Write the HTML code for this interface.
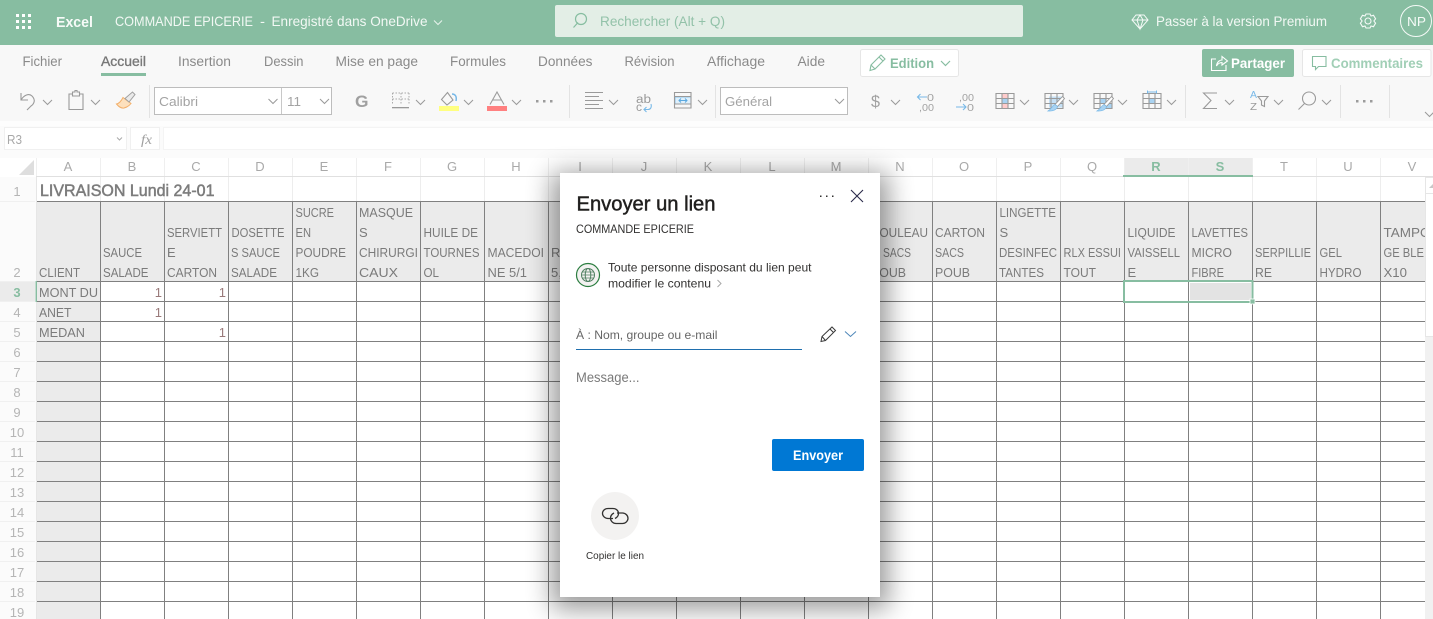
<!DOCTYPE html>
<html lang="fr"><head><meta charset="utf-8"><title>Excel - Envoyer un lien</title>
<style>
html,body{margin:0;padding:0;background:#fff;width:1433px;height:619px;overflow:hidden}
svg{display:block;position:absolute;left:0;top:0}
text{font-family:"Liberation Sans",sans-serif;white-space:pre}
.tb{font-size:14px;fill:#f2f8f4}
.tab{font-size:13.5px;fill:#8a8a8a}
.c{font-size:13px;fill:#7b7b7b}
.h{font-size:13px;fill:#a9a9a9;text-anchor:middle}
.r{font-size:13px;fill:#b5b5b5;text-anchor:middle}
.t{font-size:13px;fill:#a3a3a3}
.d{font-size:12px;fill:#323130}
.ic{fill:none;stroke:#9a9a9a;stroke-width:1.1}
.ch{fill:none;stroke:#9a9a9a;stroke-width:1}
</style></head><body>
<svg width="1433" height="619" viewBox="0 0 1433 619" xmlns="http://www.w3.org/2000/svg">
<defs>
<path id="cv" d="M0 0L4.5 4.5L9 0" class="ch"/>
<filter id="sh" x="-25%" y="-25%" width="150%" height="150%"><feGaussianBlur stdDeviation="13"/></filter>
<clipPath id="gc"><rect x="36" y="177" width="1389" height="442"/></clipPath>
<g id="tbl"><path d="M0 0H18V15H0ZM6 0V15M12 0V15M0 5H18M0 10H18" class="ic"/></g>
</defs>

<!-- title bar -->
<rect width="1433" height="45" fill="#87bda1"/>
<g fill="#fff"><rect x="16" y="14" width="3" height="3"/><rect x="22" y="14" width="3" height="3"/><rect x="28" y="14" width="3" height="3"/><rect x="16" y="20" width="3" height="3"/><rect x="22" y="20" width="3" height="3"/><rect x="28" y="20" width="3" height="3"/><rect x="16" y="26" width="3" height="3"/><rect x="22" y="26" width="3" height="3"/><rect x="28" y="26" width="3" height="3"/></g>
<text x="56" y="27" font-size="14.5" font-weight="700" fill="#f7fbf8" textLength="37" lengthAdjust="spacingAndGlyphs">Excel</text>
<text class="tb" x="115" y="26" textLength="138" lengthAdjust="spacingAndGlyphs">COMMANDE EPICERIE</text>
<text class="tb" x="260" y="26" textLength="5" lengthAdjust="spacingAndGlyphs">-</text>
<text class="tb" x="271.5" y="26" textLength="156" lengthAdjust="spacingAndGlyphs">Enregistré dans OneDrive</text>
<path d="M434 20.5L438 24.5L442 20.5" fill="none" stroke="#e8f3ec" stroke-width="1"/>
<rect x="555" y="5" width="468" height="32" rx="2" fill="#e3eee6"/>
<path d="M578 22.5L573.5 27.5M586.5 19a5.5 5.5 0 1 1-11 0a5.5 5.5 0 1 1 11 0Z" fill="none" stroke="#86bda0" stroke-width="1.2"/>
<text x="600" y="26" font-size="14" fill="#93c2a9" textLength="125" lengthAdjust="spacingAndGlyphs">Rechercher (Alt + Q)</text>
<path d="M1136 15H1144L1148 20L1140 29L1132 20ZM1132 20H1148M1137 20L1140 29L1143 20L1140 15L1137 20" fill="none" stroke="#f5faf7" stroke-width="1"/>
<text class="tb" x="1156" y="26" textLength="171" lengthAdjust="spacingAndGlyphs">Passer à la version Premium</text>
<circle cx="1368" cy="21" r="3" fill="none" stroke="#f5faf7" stroke-width="1.1"/>
<path d="M1366 14H1370L1371 16L1373.5 15.3L1375.6 18.8L1374 20.8V21.2L1375.6 23.2L1373.5 26.7L1371 26L1370 28H1366L1365 26L1362.5 26.7L1360.4 23.2L1362 21.2V20.8L1360.4 18.8L1362.5 15.3L1365 16Z" fill="none" stroke="#f5faf7" stroke-width="1.1"/>
<circle cx="1416" cy="21" r="15.5" fill="none" stroke="#f5faf7" stroke-width="1"/>
<text x="1407" y="26" font-size="13" fill="#f5faf7" textLength="19" lengthAdjust="spacingAndGlyphs">NP</text>

<!-- ribbon -->
<rect y="45" width="1433" height="76" fill="#f8f8f8"/>
<rect y="121" width="1433" height="37" fill="#fbfbfb"/>
<rect y="121" width="1433" height="5" fill="#fdfdfd"/>
<text class="tab" x="22.5" y="66" textLength="39.5" lengthAdjust="spacingAndGlyphs">Fichier</text>
<text x="101" y="66" font-size="13.5" fill="#787878" stroke="#787878" stroke-width=".35" textLength="45" lengthAdjust="spacingAndGlyphs">Accueil</text>
<rect x="101" y="73" width="45" height="3" fill="#87bda1"/>
<text class="tab" x="178" y="66" textLength="53" lengthAdjust="spacingAndGlyphs">Insertion</text>
<text class="tab" x="264" y="66" textLength="39.5" lengthAdjust="spacingAndGlyphs">Dessin</text>
<text class="tab" x="335.5" y="66" textLength="82.5" lengthAdjust="spacingAndGlyphs">Mise en page</text>
<text class="tab" x="450" y="66" textLength="56" lengthAdjust="spacingAndGlyphs">Formules</text>
<text class="tab" x="538" y="66" textLength="54.5" lengthAdjust="spacingAndGlyphs">Données</text>
<text class="tab" x="624.5" y="66" textLength="50" lengthAdjust="spacingAndGlyphs">Révision</text>
<text class="tab" x="707" y="66" textLength="58" lengthAdjust="spacingAndGlyphs">Affichage</text>
<text class="tab" x="797.5" y="66" textLength="27.5" lengthAdjust="spacingAndGlyphs">Aide</text>

<rect x="860.5" y="49.5" width="98" height="27" rx="2" fill="#fff" stroke="#e6e6e6"/>
<path d="M870 70.5L871 65L881 55L885 59L875 69ZM871 65L875 69M879 57L883 61" fill="none" stroke="#87bda1" stroke-width="1.1"/>
<text x="890" y="68" font-size="14" font-weight="700" fill="#87bda1" textLength="44" lengthAdjust="spacingAndGlyphs">Edition</text>
<path d="M941 61L945.5 65.5L950 61" fill="none" stroke="#87bda1" stroke-width="1.2"/>

<rect x="1202" y="49" width="92" height="28" rx="2" fill="#87bda1"/>
<path d="M1216 59H1211.5V70.5H1226V65M1216.5 66C1217 61.5 1220 60 1222 60V56.5L1227.5 61L1222 65V62.5C1220 62.5 1218 63.5 1216.5 66Z" fill="none" stroke="#fff" stroke-width="1.1"/>
<text x="1231" y="68" font-size="14" font-weight="700" fill="#fff" textLength="54" lengthAdjust="spacingAndGlyphs">Partager</text>
<rect x="1302.5" y="49.5" width="128.5" height="27" rx="2" fill="#fff" stroke="#e6e6e6"/>
<path d="M1312.5 56.5H1326V66.5H1318.5L1315.5 69.5V66.5H1312.5Z" fill="none" stroke="#87bda1" stroke-width="1.1"/>
<text x="1331" y="68" font-size="14" font-weight="700" fill="#a1cfb6" textLength="92" lengthAdjust="spacingAndGlyphs">Commentaires</text>

<!-- toolbar -->
<path d="M21 93V100H28M21 100C24 95 29 93 32 96C36 100 34 104 31 106L27 110" class="ic" stroke-width="1.2"/>
<use href="#cv" x="43" y="100"/>
<path d="M72.5 94H69V109.5H83V94H79.5M72.5 92H75V90.5H77V92H79.5V96H72.5Z" class="ic"/>
<use href="#cv" x="91" y="100"/>
<path d="M123 97.5L131 103.5C129 106 126 107.500 124 108C121 108.500 119 107 116.500 104C119 103.500 121.500 100.500 123 97.500Z" fill="#fde0bd" stroke="#f3b06b" stroke-width="1"/>
<path d="M125 98.500L132.500 92L135 94.500L129 102Z" fill="#eaeaea" stroke="#a0a0a0" stroke-width="1"/>
<rect x="149" y="85" width="1" height="33" fill="#e3e3e3"/>
<rect x="154.5" y="87.5" width="177" height="27" fill="#fff" stroke="#bdbdbd"/>
<path d="M281.5 88V114" stroke="#c8c8c8"/>
<text class="t" x="159" y="106" textLength="39" lengthAdjust="spacingAndGlyphs">Calibri</text>
<use href="#cv" x="268.5" y="99"/>
<text class="t" x="287" y="106" textLength="14" lengthAdjust="spacingAndGlyphs">11</text>
<use href="#cv" x="320" y="99"/>
<text x="355" y="107" font-size="17" font-weight="700" fill="#a0a0a0" textLength="13.5" lengthAdjust="spacingAndGlyphs">G</text>
<path d="M392.5 93H409M392.5 93V104M409 93V104M401 93V104M392.5 99H409" fill="none" stroke="#aaa" stroke-width="1" stroke-dasharray="1.5 1.5"/>
<rect x="392" y="107" width="17" height="1.3" fill="#999"/>
<use href="#cv" x="416" y="100"/>
<path d="M441.5 99.5L447.5 92.5L453 100L447 105Z" class="ic"/>
<path d="M452 94C455 94 457 96 456 101" fill="none" stroke="#78b9e8" stroke-width="1.5"/>
<rect x="439" y="106" width="20" height="5" fill="#ffff80"/>
<use href="#cv" x="464" y="100"/>
<path d="M490 104.5L497 92L504 104.5M492.5 100H501.5" fill="none" stroke="#9c9c9c" stroke-width="1.1"/>
<rect x="487" y="106" width="20" height="5" fill="#ff8080"/>
<use href="#cv" x="512" y="100"/>
<g fill="#9c9c9c"><rect x="536" y="100" width="2.5" height="2.5"/><rect x="543" y="100" width="2.5" height="2.5"/><rect x="550" y="100" width="2.5" height="2.5"/></g>
<rect x="569" y="85" width="1" height="33" fill="#e3e3e3"/>
<path d="M585 92.5H603M585 96.5H599M585 100.5H603M585 104.5H599M585 108.5H603" class="ic"/>
<use href="#cv" x="609" y="100"/>
<text x="636" y="103" font-size="11.5" fill="#9a9a9a" textLength="15" lengthAdjust="spacingAndGlyphs">ab</text>
<text x="636" y="111" font-size="11.5" fill="#9a9a9a" textLength="6" lengthAdjust="spacingAndGlyphs">c</text>
<path d="M651 104C652 108 650 109.500 648 109.500H644M646.500 107L644 109.500L646.500 112" fill="none" stroke="#78b9e8" stroke-width="1.1"/>
<rect x="675" y="97" width="16" height="7" fill="#e0f0fb" stroke="#8cc6ee"/>
<path d="M674.5 92.500H691V108H674.500ZM674.500 96.500H691M674.500 104H691" class="ic"/>
<path d="M679 100.500H687M681 98.500L679 100.500L681 102.500M685 98.500L687 100.500L685 102.500" fill="none" stroke="#5ba9e0" stroke-width="1"/>
<use href="#cv" x="698" y="100"/>
<rect x="715" y="85" width="1" height="33" fill="#e3e3e3"/>
<rect x="720.5" y="87.500" width="127" height="27" fill="#fff" stroke="#bdbdbd"/>
<text class="t" x="725" y="106" textLength="47" lengthAdjust="spacingAndGlyphs">Général</text>
<use href="#cv" x="835" y="99"/>
<text x="871" y="107" font-size="17" fill="#a0a0a0" textLength="9" lengthAdjust="spacingAndGlyphs">$</text>
<use href="#cv" x="891" y="100"/>
<path d="M927 97H917.500M920.500 94L917.500 97L920.500 100" fill="none" stroke="#78b9e8" stroke-width="1.1"/>
<text x="927" y="101" font-size="10.500" fill="#a3a3a3" textLength="7" lengthAdjust="spacingAndGlyphs">0</text>
<text x="919" y="111" font-size="10.500" fill="#a3a3a3" textLength="15" lengthAdjust="spacingAndGlyphs">,00</text>
<text x="959" y="101" font-size="10.500" fill="#a3a3a3" textLength="15" lengthAdjust="spacingAndGlyphs">,00</text>
<path d="M956 107H966M963 104L966 107L963 110" fill="none" stroke="#78b9e8" stroke-width="1.1"/>
<text x="967" y="111" font-size="10.500" fill="#a3a3a3" textLength="7" lengthAdjust="spacingAndGlyphs">0</text>

<g transform="translate(996,93.500)"><rect x="6" y="0" width="6" height="5" fill="#fcc"/><rect x="6" y="5" width="6" height="5" fill="#a9d3f2"/><rect x="6" y="10" width="6" height="5" fill="#fcc"/><use href="#tbl"/></g>
<use href="#cv" x="1020" y="100"/>
<g transform="translate(1045,93.500)"><rect x="4" y="3" width="14" height="11" fill="#c5e0f5"/><use href="#tbl"/><path d="M17.500 3L19.500 5L12.500 13L10 11Z" fill="#fff" stroke="#9a9a9a" stroke-width=".9"/><path d="M10 11L12.500 13C12 16 8 18 3 17.500C6 16 6.500 13 10 11Z" fill="#a9d3f2" stroke="#78b9e8" stroke-width=".7"/></g>
<use href="#cv" x="1069" y="100"/>
<g transform="translate(1094,93.500)"><rect x="6" y="5" width="6" height="5" fill="#a9d3f2"/><rect x="12" y="10" width="6" height="5" fill="#a9d3f2"/><use href="#tbl"/><path d="M17.500 3L19.500 5L12.500 13L10 11Z" fill="#fff" stroke="#9a9a9a" stroke-width=".9"/><path d="M10 11L12.500 13C12 16 8 18 3 17.500C6 16 6.500 13 10 11Z" fill="#a9d3f2" stroke="#78b9e8" stroke-width=".7"/></g>
<use href="#cv" x="1118" y="100"/>
<g transform="translate(1143,93.500)"><rect x="6" y="5" width="6" height="5" fill="#a9d3f2"/><use href="#tbl"/><path d="M4.500 -1.500H13.500M4.500 -3V0M13.500 -3V0" fill="none" stroke="#78b9e8"/></g>
<use href="#cv" x="1167" y="100"/>
<rect x="1185" y="85" width="1" height="33" fill="#e3e3e3"/>
<path d="M1217 93H1203.500L1211 100.500L1203.500 108.500H1217" class="ic"/>
<use href="#cv" x="1225" y="100"/>
<text x="1250" y="98" font-size="10" fill="#78b9e8" textLength="7" lengthAdjust="spacingAndGlyphs">A</text>
<text x="1250" y="110" font-size="10" fill="#999" textLength="7" lengthAdjust="spacingAndGlyphs">Z</text>
<path d="M1258 96.500H1268L1264.500 101V106.500L1261.500 105V101Z" class="ic"/>
<use href="#cv" x="1274" y="100"/>
<circle cx="1309" cy="98.500" r="6.500" class="ic"/><path d="M1304.500 103.500L1298.500 109.500" class="ic"/>
<use href="#cv" x="1322" y="100"/>
<rect x="1340" y="85" width="1" height="33" fill="#e3e3e3"/>
<g fill="#9c9c9c"><rect x="1356" y="100" width="2.500" height="2.500"/><rect x="1363" y="100" width="2.500" height="2.500"/><rect x="1370" y="100" width="2.500" height="2.500"/></g>
<rect x="1389" y="85" width="1" height="33" fill="#e3e3e3"/>
<use href="#cv" x="1425" y="112"/>

<!-- formula bar -->
<rect x="4.500" y="127.500" width="122" height="22" fill="#fff" stroke="#f0f0f0"/>
<text x="7" y="144" font-size="12.500" fill="#a8a8a8" textLength="15" lengthAdjust="spacingAndGlyphs">R3</text>
<path d="M117 137.500L119.500 140L122 137.500" fill="none" stroke="#aaa"/>
<rect x="130.500" y="127.500" width="29" height="22" fill="#fff" stroke="#f0f0f0"/>
<text x="141" y="144" font-size="14" font-style="italic" fill="#a0a0a0" style="font-family:'Liberation Serif',serif" textLength="11" lengthAdjust="spacingAndGlyphs">fx</text>
<rect x="163.500" y="127.500" width="1270" height="22" fill="#fff" stroke="#f4f4f4"/>

<!-- headers -->
<rect x="1124" y="158" width="129" height="18" fill="#ebebeb"/>
<path d="M19 175H34V160Z" fill="#dedede"/>
<path d="M36.500 158V177M100.500 158V177M164.500 158V177M228.500 158V177M292.500 158V177M356.500 158V177M420.500 158V177M484.500 158V177M548.500 158V177M612.500 158V177M676.500 158V177M740.500 158V177M804.500 158V177M868.500 158V177M932.500 158V177M996.500 158V177M1060.500 158V177M1124.500 158V177M1188.500 158V177M1252.500 158V177M1316.500 158V177M1380.500 158V177" stroke="#efefef"/>
<rect x="36" y="176" width="1397" height="1" fill="#e0e0e0"/>
<rect x="1123" y="175" width="130" height="2" fill="#87bda1"/>
<text class="h" x="68" y="171">A</text><text class="h" x="132" y="171">B</text><text class="h" x="196" y="171">C</text><text class="h" x="260" y="171">D</text><text class="h" x="324" y="171">E</text><text class="h" x="388" y="171">F</text><text class="h" x="452" y="171">G</text><text class="h" x="516" y="171">H</text><text class="h" x="580" y="171">I</text><text class="h" x="644" y="171">J</text><text class="h" x="708" y="171">K</text><text class="h" x="772" y="171">L</text><text class="h" x="836" y="171">M</text><text class="h" x="900" y="171">N</text><text class="h" x="964" y="171">O</text><text class="h" x="1028" y="171">P</text><text class="h" x="1092" y="171">Q</text>
<text class="h" x="1156" y="171" font-weight="700" style="fill:#87bda1">R</text><text class="h" x="1220" y="171" font-weight="700" style="fill:#87bda1">S</text>
<text class="h" x="1284" y="171">T</text><text class="h" x="1348" y="171">U</text><text class="h" x="1412" y="171">V</text>

<!-- row headers -->
<rect x="0" y="177" width="36" height="442" fill="#fbfbfb"/>
<rect x="0" y="281" width="35" height="21" fill="#ebebeb"/>
<text class="r" x="17" y="196">1</text><text class="r" x="17" y="277">2</text>
<text class="r" x="17" y="297" font-weight="700" style="fill:#87bda1">3</text>
<text class="r" x="17" y="317">4</text><text class="r" x="17" y="337">5</text><text class="r" x="17" y="357">6</text><text class="r" x="17" y="377">7</text><text class="r" x="17" y="397">8</text><text class="r" x="17" y="417">9</text><text class="r" x="17" y="437">10</text><text class="r" x="17" y="457">11</text><text class="r" x="17" y="477">12</text><text class="r" x="17" y="497">13</text><text class="r" x="17" y="517">14</text><text class="r" x="17" y="537">15</text><text class="r" x="17" y="557">16</text><text class="r" x="17" y="577">17</text><text class="r" x="17" y="597">18</text><text class="r" x="17" y="617">19</text>
<path d="M0 201.500H35M0 281.500H35M0 301.500H35M0 321.500H35M0 341.500H35M0 361.500H35M0 381.500H35M0 401.500H35M0 421.500H35M0 441.500H35M0 461.500H35M0 481.500H35M0 501.500H35M0 521.500H35M0 541.500H35M0 561.500H35M0 581.500H35M0 601.500H35" stroke="#f0f0f0"/>

<!-- sheet -->
<g clip-path="url(#gc)">
<rect x="36" y="177" width="1397" height="442" fill="#fff"/>
<rect x="36" y="201" width="1397" height="80" fill="#ebebeb"/>
<rect x="36" y="281" width="64" height="338" fill="#ebebeb"/>
<path d="M100.500 177V201M164.500 177V201M228.500 177V201M292.500 177V201M356.500 177V201M420.500 177V201M484.500 177V201M548.500 177V201M612.500 177V201M676.500 177V201M740.500 177V201M804.500 177V201M868.500 177V201M932.500 177V201M996.500 177V201M1060.500 177V201M1124.500 177V201M1188.500 177V201M1252.500 177V201M1316.500 177V201M1380.500 177V201" stroke="#ededed"/>
<path d="M36 201.500H1433M36 281.500H1433M36 301.500H1433M36 321.500H1433M36 341.500H1433M36 361.500H1433M36 381.500H1433M36 401.500H1433M36 421.500H1433M36 441.500H1433M36 461.500H1433M36 481.500H1433M36 501.500H1433M36 521.500H1433M36 541.500H1433M36 561.500H1433M36 581.500H1433M36 601.500H1433" stroke="#808080"/>
<path d="M100.500 201V619M164.500 201V619M228.500 201V619M292.500 201V619M356.500 201V619M420.500 201V619M484.500 201V619M548.500 201V619M612.500 201V619M676.500 201V619M740.500 201V619M804.500 201V619M868.500 201V619M932.500 201V619M996.500 201V619M1060.500 201V619M1124.500 201V619M1188.500 201V619M1252.500 201V619M1316.500 201V619M1380.500 201V619" stroke="#808080"/>
<text x="40" y="196" font-size="16.500" fill="#7c7c7c" stroke="#7c7c7c" stroke-width=".5" textLength="174.500" lengthAdjust="spacingAndGlyphs">LIVRAISON Lundi 24-01</text>
<text class="c" x="39" y="277" textLength="41" lengthAdjust="spacingAndGlyphs">CLIENT</text>
<text class="c" x="103" y="257" textLength="39" lengthAdjust="spacingAndGlyphs">SAUCE</text><text class="c" x="103" y="277" textLength="45.500" lengthAdjust="spacingAndGlyphs">SALADE</text>
<text class="c" x="167" y="237" textLength="55" lengthAdjust="spacingAndGlyphs">SERVIETT</text><text class="c" x="167" y="257">E</text><text class="c" x="167" y="277" textLength="50" lengthAdjust="spacingAndGlyphs">CARTON</text>
<text class="c" x="231.500" y="237" textLength="53" lengthAdjust="spacingAndGlyphs">DOSETTE</text><text class="c" x="231" y="257" textLength="49" lengthAdjust="spacingAndGlyphs">S SAUCE</text><text class="c" x="231" y="277" textLength="46" lengthAdjust="spacingAndGlyphs">SALADE</text>
<text class="c" x="295.500" y="217" textLength="38.500" lengthAdjust="spacingAndGlyphs">SUCRE</text><text class="c" x="295.500" y="237" textLength="15.500" lengthAdjust="spacingAndGlyphs">EN</text><text class="c" x="295.500" y="257" textLength="50.500" lengthAdjust="spacingAndGlyphs">POUDRE</text><text class="c" x="295.500" y="277" textLength="23.500" lengthAdjust="spacingAndGlyphs">1KG</text>
<text class="c" x="359" y="217" textLength="54" lengthAdjust="spacingAndGlyphs">MASQUE</text><text class="c" x="359" y="237">S</text><text class="c" x="359" y="257" textLength="59" lengthAdjust="spacingAndGlyphs">CHIRURGI</text><text class="c" x="359" y="277" textLength="39" lengthAdjust="spacingAndGlyphs">CAUX</text>
<text class="c" x="423.500" y="237" textLength="54.500" lengthAdjust="spacingAndGlyphs">HUILE DE</text><text class="c" x="423.500" y="257" textLength="56" lengthAdjust="spacingAndGlyphs">TOURNES</text><text class="c" x="423.500" y="277" textLength="15.500" lengthAdjust="spacingAndGlyphs">OL</text>
<text class="c" x="487.500" y="257" textLength="56.500" lengthAdjust="spacingAndGlyphs">MACEDOI</text><text class="c" x="487.500" y="277" textLength="39.500" lengthAdjust="spacingAndGlyphs">NE 5/1</text>
<text class="c" x="551" y="257">R</text><text class="c" x="551" y="277">5,</text>
<text class="c" x="871" y="237" textLength="57" lengthAdjust="spacingAndGlyphs">ROULEAU</text><text class="c" x="883" y="257" textLength="28" lengthAdjust="spacingAndGlyphs">SACS</text><text class="c" x="871" y="277" textLength="35" lengthAdjust="spacingAndGlyphs">POUB</text>
<text class="c" x="935" y="237" textLength="50" lengthAdjust="spacingAndGlyphs">CARTON</text><text class="c" x="935" y="257" textLength="29" lengthAdjust="spacingAndGlyphs">SACS</text><text class="c" x="935" y="277" textLength="35" lengthAdjust="spacingAndGlyphs">POUB</text>
<text class="c" x="999.500" y="217" textLength="56.500" lengthAdjust="spacingAndGlyphs">LINGETTE</text><text class="c" x="999.500" y="237">S</text><text class="c" x="999" y="257" textLength="58" lengthAdjust="spacingAndGlyphs">DESINFEC</text><text class="c" x="999" y="277" textLength="45" lengthAdjust="spacingAndGlyphs">TANTES</text>
<text class="c" x="1063.500" y="257" textLength="57.500" lengthAdjust="spacingAndGlyphs">RLX ESSUI</text><text class="c" x="1063.500" y="277" textLength="32.500" lengthAdjust="spacingAndGlyphs">TOUT</text>
<text class="c" x="1127.500" y="237" textLength="48" lengthAdjust="spacingAndGlyphs">LIQUIDE</text><text class="c" x="1127.500" y="257" textLength="52.500" lengthAdjust="spacingAndGlyphs">VAISSELL</text><text class="c" x="1127.500" y="277">E</text>
<text class="c" x="1191.500" y="237" textLength="56.500" lengthAdjust="spacingAndGlyphs">LAVETTES</text><text class="c" x="1191.500" y="257" textLength="40.500" lengthAdjust="spacingAndGlyphs">MICRO</text><text class="c" x="1191.500" y="277" textLength="32.500" lengthAdjust="spacingAndGlyphs">FIBRE</text>
<text class="c" x="1255" y="257" textLength="56" lengthAdjust="spacingAndGlyphs">SERPILLIE</text><text class="c" x="1255" y="277" textLength="17" lengthAdjust="spacingAndGlyphs">RE</text>
<text class="c" x="1319.500" y="257" textLength="22.500" lengthAdjust="spacingAndGlyphs">GEL</text><text class="c" x="1319.500" y="277" textLength="42" lengthAdjust="spacingAndGlyphs">HYDRO</text>
<text class="c" x="1383.500" y="237" textLength="47" lengthAdjust="spacingAndGlyphs">TAMPO</text><text class="c" x="1383.500" y="257" textLength="40.500" lengthAdjust="spacingAndGlyphs">GE BLE</text><text class="c" x="1383.500" y="277" textLength="23.500" lengthAdjust="spacingAndGlyphs">X10</text>
<text class="c" x="39" y="297" textLength="59" lengthAdjust="spacingAndGlyphs">MONT DU</text><text class="c" x="39" y="317" textLength="32.500" lengthAdjust="spacingAndGlyphs">ANET</text><text class="c" x="39" y="337" textLength="46" lengthAdjust="spacingAndGlyphs">MEDAN</text>
<g style="text-anchor:end"><text class="c" x="162" y="297" style="fill:#9a7a7a">1</text><text class="c" x="226" y="297" style="fill:#9a7a7a">1</text><text class="c" x="162" y="317" style="fill:#9a7a7a">1</text><text class="c" x="226" y="337" style="fill:#9a7a7a">1</text></g>
<rect x="1190" y="283" width="61" height="17" fill="#e3e3e3"/>
<rect x="1124" y="281" width="128.500" height="21" fill="none" stroke="#87bda1" stroke-width="2"/>
<rect x="1250" y="299" width="5" height="5" fill="#87bda1" stroke="#fff" stroke-width=".8"/>
</g>
<rect x="36" y="177" width="1" height="442" fill="#e6e6e6"/>
<rect x="35.500" y="281" width="1.500" height="21" fill="#87bda1"/>

<!-- scrollbar -->
<rect x="1425" y="177" width="8" height="442" fill="#f1f1f1"/>
<rect x="1425.500" y="177.500" width="8" height="159" fill="#fff" stroke="#e6e6e6"/>
<path d="M1429 188H1433V184Z" fill="#c8c8c8"/>
<rect x="1425" y="193" width="8" height="1" fill="#e6e6e6"/>

<!-- dialog -->
<rect x="552" y="173" width="336" height="436" fill="#000" opacity=".4" filter="url(#sh)"/>
<rect x="560" y="173" width="320" height="424" fill="#fff"/>
<text x="576.500" y="210.500" font-size="20" fill="#201f1e" stroke="#201f1e" stroke-width=".45" textLength="139" lengthAdjust="spacingAndGlyphs">Envoyer un lien</text>
<text class="d" x="576" y="233" textLength="118" lengthAdjust="spacingAndGlyphs">COMMANDE EPICERIE</text>
<g fill="#323130"><rect x="820" y="195.500" width="1.500" height="1.500"/><rect x="826" y="195.500" width="1.500" height="1.500"/><rect x="832" y="195.500" width="1.500" height="1.500"/></g>
<path d="M851 190L863 202M863 190L851 202" stroke="#2b2b4a" stroke-width="1.100" fill="none"/>
<circle cx="588" cy="275" r="11.500" fill="#f3f2f1" stroke="#2a7d3f" stroke-width="1.200"/>
<circle cx="588" cy="275" r="6.500" fill="none" stroke="#4f7f60" stroke-width="1"/>
<ellipse cx="588" cy="275" rx="2.800" ry="6.500" fill="none" stroke="#4f7f60" stroke-width="1"/>
<path d="M581.500 275H594.500M582.500 272H593.500M582.500 278H593.500" stroke="#4f7f60" stroke-width=".8" fill="none"/>
<text class="d" x="608" y="271.500" textLength="203.500" lengthAdjust="spacingAndGlyphs">Toute personne disposant du lien peut</text>
<text class="d" x="608" y="287.500" textLength="103" lengthAdjust="spacingAndGlyphs">modifier le contenu</text>
<path d="M717.500 280L721 283.500L717.500 287" fill="none" stroke="#a8a8a8" stroke-width="1"/>
<text x="576" y="339" font-size="12" fill="#666" textLength="141.500" lengthAdjust="spacingAndGlyphs">À : Nom, groupe ou e-mail</text>
<rect x="576" y="349" width="226" height="1" fill="#1f6fae"/>
<path d="M821 341.500L822 336.500L832 327L835.500 330.500L825.500 340.500ZM822 336.500L825.500 340.500M830 329L833.500 332.500" fill="none" stroke="#3a3a3a" stroke-width="1"/>
<path d="M845 331.500L850.500 336.500L856 331.500" fill="none" stroke="#4d86b8" stroke-width="1"/>
<text x="576" y="382" font-size="13.500" fill="#7a7a7a" textLength="63.500" lengthAdjust="spacingAndGlyphs">Message...</text>
<rect x="772" y="439" width="92" height="32" rx="2" fill="#0078d4"/>
<text x="793" y="460" font-size="14" font-weight="700" fill="#fff" textLength="50" lengthAdjust="spacingAndGlyphs">Envoyer</text>
<circle cx="615" cy="516" r="24" fill="#f3f2f1"/>
<path d="M613 518.500H608C605 518.500 602.500 516 602.500 513.500C602.500 510.500 605 508.500 608 508.500H613C616 508.500 618.500 510.500 618.500 513.500C618.500 515.500 617 517.500 615 518.500" fill="none" stroke="#323130" stroke-width="1.300"/>
<path d="M617 513H622.500C625.500 513 628 515.500 628 518.300C628 521 625.500 523.500 622.500 523.500H616C613 523.500 610.500 521 610.500 518.300C610.500 516 612 514 614 513" fill="none" stroke="#323130" stroke-width="1.300"/>
<text x="586" y="559" font-size="10" fill="#323130" textLength="58" lengthAdjust="spacingAndGlyphs">Copier le lien</text>
</svg>
</body></html>
